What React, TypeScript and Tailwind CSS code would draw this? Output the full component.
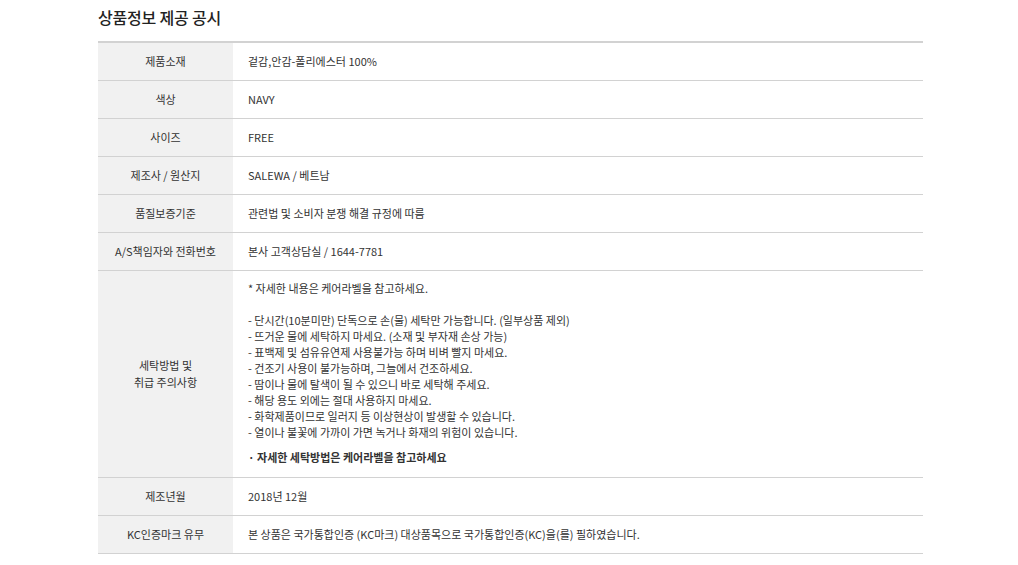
import React from "react";

const rows: { label: React.ReactNode; value: React.ReactNode; tall?: boolean }[] = [
  { label: "제품소재", value: "겉감,안감-폴리에스터 100%" },
  { label: "색상", value: "NAVY" },
  { label: "사이즈", value: "FREE" },
  { label: "제조사 / 원산지", value: "SALEWA / 베트남" },
  { label: "품질보증기준", value: "관련법 및 소비자 분쟁 해결 규정에 따름" },
  { label: "A/S책임자와 전화번호", value: "본사 고객상담실 / 1644-7781" },
];

const care = [
  "- 단시간(10분미만) 단독으로 손(물) 세탁만 가능합니다. (일부상품 제외)",
  "- 뜨거운 물에 세탁하지 마세요. (소재 및 부자재 손상 가능)",
  "- 표백제 및 섬유유연제 사용불가능 하며 비벼 빨지 마세요.",
  "- 건조기 사용이 불가능하며, 그늘에서 건조하세요.",
  "- 땀이나 물에 탈색이 될 수 있으니 바로 세탁해 주세요.",
  "- 해당 용도 외에는 절대 사용하지 마세요.",
  "- 화학제품이므로 일러지 등 이상현상이 발생할 수 있습니다.",
  "- 열이나 불꽃에 가까이 가면 녹거나 화재의 위험이 있습니다.",
];

function Row({ label, children, tall }: { label: React.ReactNode; children: React.ReactNode; tall?: boolean }) {
  return (
    <div className="flex border-b border-[#d2d2d2]">
      <div className="w-[135px] shrink-0 bg-[#f1f1f1] flex items-center justify-center text-center leading-[17px]">
        {label}
      </div>
      <div className={tall ? "flex-1 pl-[15px] pt-[9px] pb-[12px]" : "flex-1 pl-[15px] h-[37px] flex items-center"}>
        {children}
      </div>
    </div>
  );
}

export default function App() {
  return (
    <div
      className="w-[1018px] h-[565px] bg-white text-[#333] overflow-hidden"
      style={{ fontFamily: '"Noto Sans CJK KR", "Noto Sans", sans-serif' }}
    >
      <div className="ml-[98px] w-[825px]">
        <h2 className="text-[16px] font-medium text-[#222] h-[41px] pt-[5px] leading-[24px] tracking-[-0.2px]">
          상품정보 제공 공시
        </h2>
        <div className="border-t-2 border-[#d2d2d2] text-[11px]">
          {rows.map((r, i) => (
            <Row key={i} label={r.label}>
              {r.value}
            </Row>
          ))}
          <Row
            tall
            label={
              <div>
                세탁방법 및
                <br />
                취급 주의사항
              </div>
            }
          >
            <div className="leading-[16px]">
              <div>* 자세한 내용은 케어라벨을 참고하세요.</div>
              <div className="h-[16px]" />
              {care.map((c, i) => (
                <div key={i}>{c}</div>
              ))}
              <div className="mt-[9px] font-semibold">· 자세한 세탁방법은 케어라벨을 참고하세요</div>
            </div>
          </Row>
          <Row label="제조년월">2018년 12월</Row>
          <Row label="KC인증마크 유무">본 상품은 국가통합인증 (KC마크) 대상품목으로 국가통합인증(KC)을(를) 필하였습니다.</Row>
        </div>
      </div>
    </div>
  );
}
